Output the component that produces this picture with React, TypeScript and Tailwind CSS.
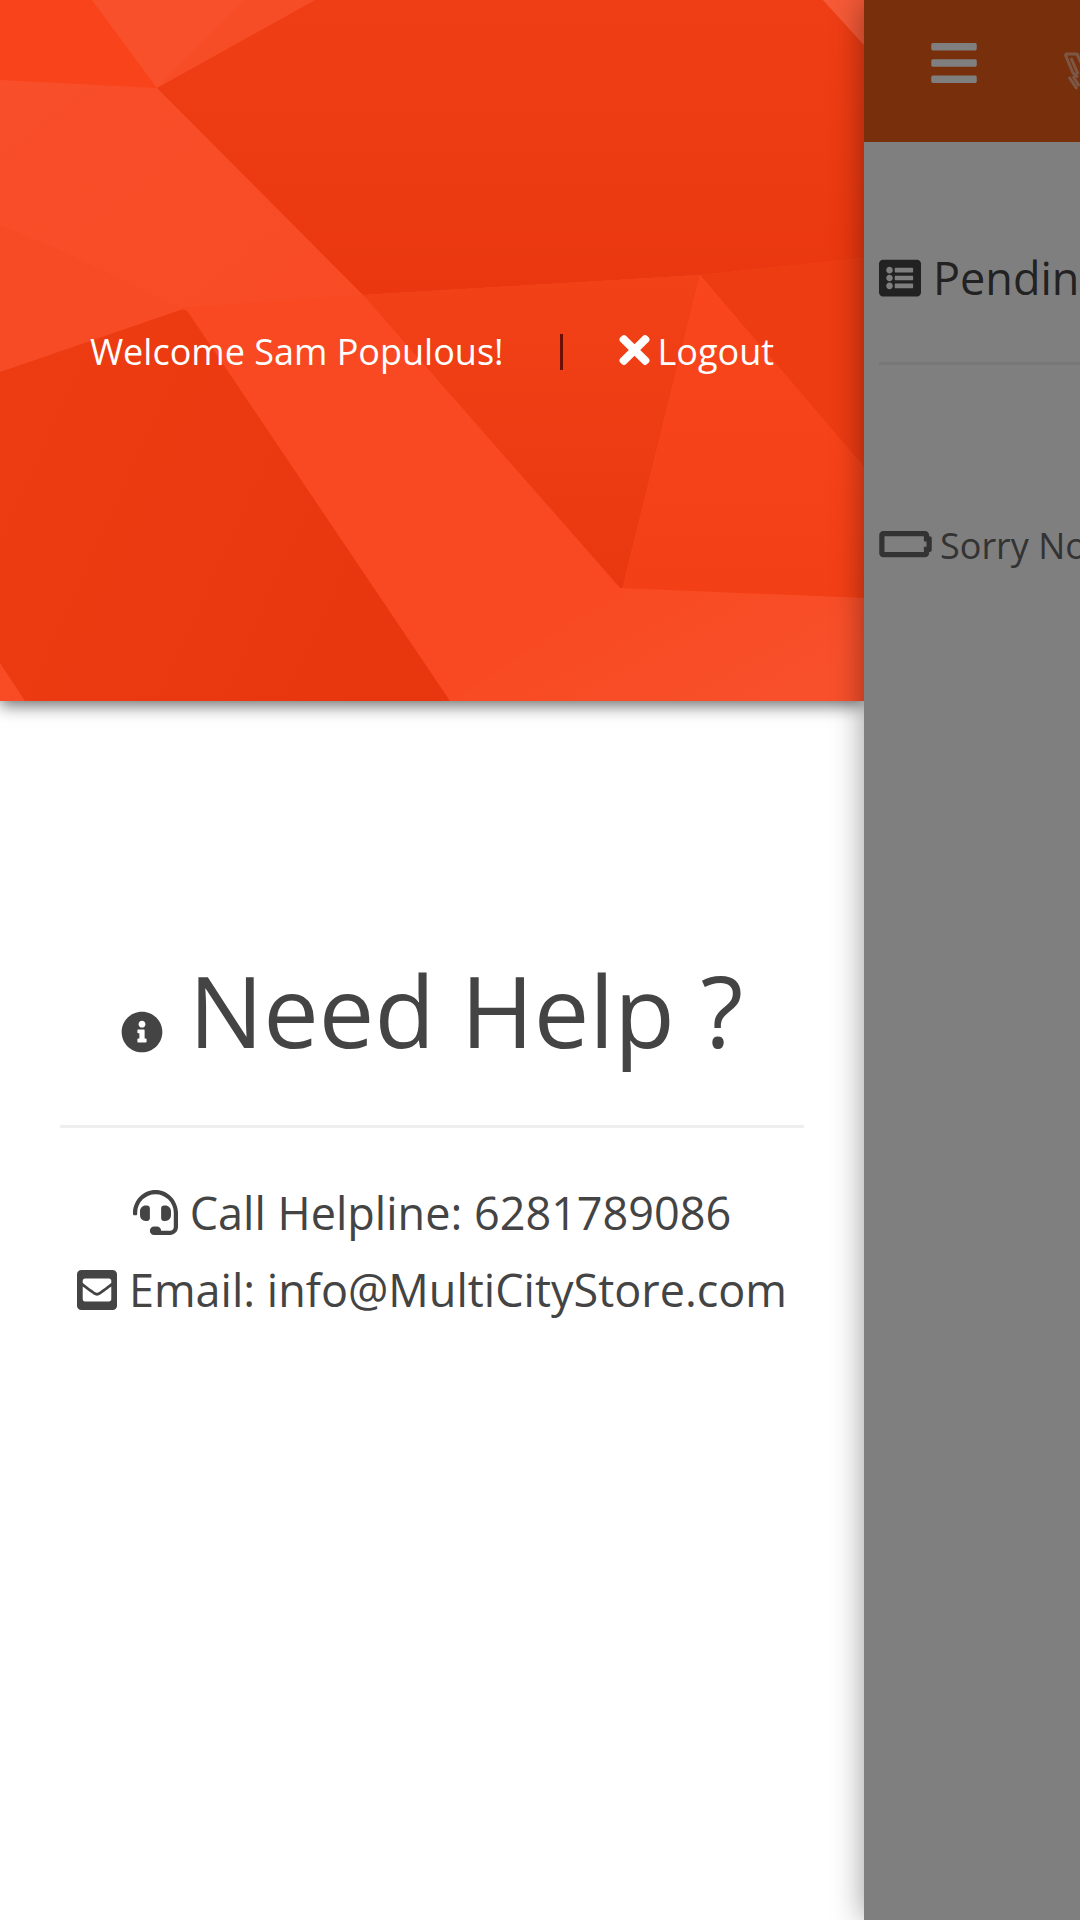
import React from "react";
import {
  FaBars,
  FaBatteryEmpty,
  FaEnvelopeSquare,
  FaHeadset,
  FaInfoCircle,
  FaListAlt,
  FaTimes,
} from "react-icons/fa";

function Facets() {
  return (
    <svg
      className="absolute inset-0 h-full w-full"
      viewBox="0 0 864 701"
      preserveAspectRatio="none"
      aria-hidden="true"
    >
      <defs>
        <linearGradient id="upper" x1="0" y1="0" x2="0" y2="1">
          <stop offset="0" stopColor="#ef3e15" />
          <stop offset="1" stopColor="#ea370f" />
        </linearGradient>
        <linearGradient id="left" x1="0" y1="0" x2="1" y2="0.4">
          <stop offset="0" stopColor="#ee3c12" />
          <stop offset="1" stopColor="#e8360f" />
        </linearGradient>
        <linearGradient id="band" x1="0" y1="0" x2="1" y2="1">
          <stop offset="0" stopColor="#f84f2a" />
          <stop offset="1" stopColor="#f9461e" />
        </linearGradient>
        <linearGradient id="wedge" x1="0" y1="0" x2="0" y2="1">
          <stop offset="0" stopColor="#f24017" />
          <stop offset="1" stopColor="#e9380f" />
        </linearGradient>
        <linearGradient id="right" x1="0" y1="0" x2="0" y2="1">
          <stop offset="0" stopColor="#fa461d" />
          <stop offset="1" stopColor="#f33f15" />
        </linearGradient>
        <linearGradient id="floor" x1="0" y1="0" x2="1" y2="0.5">
          <stop offset="0" stopColor="#f9471f" />
          <stop offset="0.6" stopColor="#f84c25" />
          <stop offset="1" stopColor="#f8502b" />
        </linearGradient>
      </defs>
      <rect width="864" height="701" fill="url(#band)" />
      <path d="M0 0H92L157 88L0 80Z" fill="#f9431a" />
      <path d="M92 0H315L157 88Z" fill="#f8502a" />
      <path d="M245 0H315L157 88Z" fill="#f74d27" />
      <path d="M0 225L60 250L180 308L0 372Z" fill="#f74b25" />
      <path d="M180 308L363 295L430 370L620 590L450 701Z" fill="#f84922" />
      <path d="M315 0H823L864 45V258L700 275L363 295L157 88Z" fill="url(#upper)" />
      <path d="M823 0H864V45Z" fill="#f65a37" />
      <path d="M363 295L700 275L622 590Z" fill="url(#wedge)" />
      <path d="M700 275L864 258V467Z" fill="#ed3b12" />
      <path d="M700 275L864 467V600L622 590Z" fill="url(#right)" />
      <path d="M620 588L864 598V701H450Z" fill="url(#floor)" />
      <path d="M0 372L180 310Q186 308 190 315L450 701H25L0 663Z" fill="url(#left)" />
    </svg>
  );
}

function LogoMark() {
  return (
    <svg className="h-10 w-10 shrink-0" viewBox="0 0 40 40" fill="none" stroke="#fff" strokeOpacity="0.5" strokeWidth="3" strokeLinejoin="round" aria-hidden="true">
      <path d="M2 3H14L20 16M2 3L10 22L15 26M8 7L15 23M6 26L14 38M10 25L16 35" />
    </svg>
  );
}

export default function App() {
  return (
    <div className="flex min-h-screen w-full overflow-hidden bg-white font-['Open_Sans',sans-serif] text-[#444]">
      <aside className="flex w-4/5 shrink-0 flex-col">
        <header className="relative flex h-[701px] items-center justify-center shadow-[0_4px_16px_rgba(0,0,0,0.6)]">
          <Facets />
          <div className="relative flex items-center pt-0.5 text-4xl leading-[54px] whitespace-nowrap text-white">
            <span>Welcome Sam Populous!</span>
            <span className="mx-14 h-9 w-[3px] bg-[#6e0f05]" />
            <button type="button" className="flex items-center gap-2">
              <FaTimes className="mb-1 h-11 w-[31px]" />
              Logout
            </button>
          </div>
        </header>

        <section className="px-[60px] pt-[249px] text-center whitespace-nowrap">
          <h1 className="text-[99px] leading-[120px]">
            <FaInfoCircle className="mr-[26px] inline size-[42px] align-[-5px]" />
            Need Help ?
          </h1>
          <hr className="mt-[55px] mb-[46px] border-t-[3px] border-[#eee]" />
          <address className="text-[45px] leading-[77px] not-italic">
            <a className="flex items-center justify-center gap-3" href="tel:6281789086">
              <FaHeadset className="size-[45px]" />
              Call Helpline: 6281789086
            </a>
            <a className="flex items-center justify-center gap-3" href="mailto:info@MultiCityStore.com">
              <FaEnvelopeSquare className="h-[46px] w-10" />
              Email: info@MultiCityStore.com
            </a>
          </address>
        </section>
      </aside>

      <div className="relative min-w-0 flex-1 bg-white shadow-[0_0_30px_rgba(0,0,0,0.4)]">
        <div className="overflow-hidden whitespace-nowrap">
          <div className="flex h-[142px] items-start bg-[#f05e16] pt-[37px] pl-[67px] text-white">
            <button type="button" aria-label="Menu" className="mr-[86px] shrink-0">
              <FaBars className="h-[52px] w-[46px]" />
            </button>
            <div className="pt-[14px]">
              <LogoMark />
            </div>
          </div>
          <main className="pl-[15px]">
            <h2 className="flex items-center gap-3 pt-[106px] text-[45px] leading-[60px]">
              <FaListAlt className="size-[42px] shrink-0" />
              Pending
            </h2>
            <hr className="mt-[54px] border-t-[3px] border-[#eee]" />
            <p className="flex items-center gap-2 pt-[154px] text-4xl leading-[54px] text-[#666]">
              <FaBatteryEmpty className="mb-1 h-[42px] w-[53px] shrink-0" />
              Sorry No
            </p>
          </main>
        </div>
        <div className="absolute inset-0 bg-black/50" />
      </div>
    </div>
  );
}
